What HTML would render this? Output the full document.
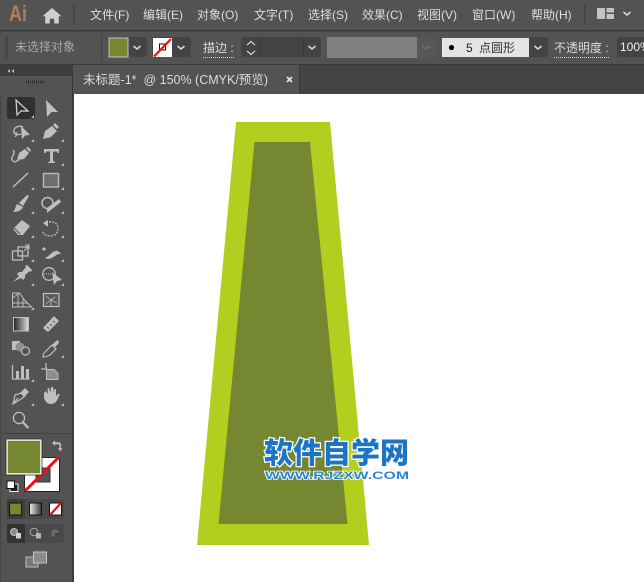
<!DOCTYPE html>
<html><head><meta charset="utf-8">
<style>
html,body{margin:0;padding:0;background:#535353;}
body{width:644px;height:582px;overflow:hidden;}
svg{display:block;}
text{font-family:"Liberation Sans","Noto Sans CJK SC",sans-serif;}
.m{font-size:12px;fill:#dedede;}
.i{fill:#bfbfbf;stroke:none;}
.s{fill:none;stroke:#bfbfbf;stroke-width:1.3;}
.c{fill:none;stroke:#dcdcdc;stroke-width:1.5;}
</style></head>
<body>
<svg width="644" height="582" viewBox="0 0 644 582" xmlns="http://www.w3.org/2000/svg">
<rect width="644" height="582" fill="#535353"/>
<!-- canvas -->
<rect x="74" y="94" width="570" height="488" fill="#fff"/>
<polygon points="236,122 330,122 369,545 197,545" fill="#b3ce1e"/>
<polygon points="254.500,142 310,142 347.500,524 218.500,524" fill="#758730"/>
<!-- top bars -->
<rect x="0" y="30" width="644" height="1.500" fill="#3a3a3a"/>
<rect x="0" y="64" width="644" height="1.500" fill="#3a3a3a"/>
<rect x="73" y="65" width="571" height="29" fill="#434343"/>
<rect x="73" y="65" width="226" height="29" fill="#535353"/>
<rect x="72" y="65" width="1" height="29" fill="#383838"/>
<rect x="299" y="65" width="1" height="29" fill="#383838"/>
<!-- menu -->
<text x="9" y="21" textLength="18" lengthAdjust="spacingAndGlyphs" style="font-size:22px;font-weight:bold" fill="#ad7d5c">Ai</text>
<path d="M52 8l9.500 8.200h-2.700v7.300h-4.600v-4.800h-4.400v4.800h-4.600v-7.300h-2.700z" fill="#cfcfcf"/>
<rect x="73" y="5" width="2" height="20" fill="#474747"/>
<text class="m" x="90" y="19">文件(F)</text>
<text class="m" x="143" y="19">编辑(E)</text>
<text class="m" x="197" y="19">对象(O)</text>
<text class="m" x="254" y="19">文字(T)</text>
<text class="m" x="308" y="19">选择(S)</text>
<text class="m" x="362" y="19">效果(C)</text>
<text class="m" x="417" y="19">视图(V)</text>
<text class="m" x="472" y="19">窗口(W)</text>
<text class="m" x="531" y="19">帮助(H)</text>
<rect x="584" y="5" width="2" height="20" fill="#474747"/>
<path d="M597 8h8v11h-8zM606.500 8h7.500v4.500h-7.500zM606.500 14h7.500v5h-7.500z" fill="#c4c4c4"/>
<path d="M623.500 12l3.500 3 3.500-3" class="c"/>
<!-- control bar -->
<path d="M6.500 37v21" stroke="#3a3a3a" stroke-width="3" stroke-dasharray="1 1"/>
<text x="15" y="51" style="font-size:12px" fill="#a8a8a8">未选择对象</text>
<rect x="101" y="35" width="1" height="25" fill="#404040"/>
<rect x="108" y="37" width="39" height="20" rx="3" fill="#434343"/>
<rect x="109" y="38" width="19" height="19" fill="#758730" stroke="#c4c4c4" stroke-width="1"/>
<path d="M133.500 46l3.500 3 3.500-3" class="c"/>
<rect x="152" y="37" width="39" height="20" rx="3" fill="#434343"/>
<rect x="153" y="38" width="19" height="19" fill="#fff"/>
<rect x="159.500" y="44" width="6" height="6" fill="none" stroke="#111" stroke-width="1"/>
<path d="M154 56.500l17-17.500" stroke="#f00e0e" stroke-width="2.200"/>
<path d="M177.500 46l3.500 3 3.500-3" class="c"/>
<text x="203" y="52" style="font-size:12px" fill="#dcdcdc">描边 :</text>
<path d="M203 57.500h32" stroke="#d0d0d0" stroke-width="1" stroke-dasharray="1 1"/>
<rect x="241" y="37" width="80" height="20" rx="3" fill="#434343"/>
<rect x="259" y="37" width="1" height="20" fill="#383838"/>
<rect x="303" y="37" width="1" height="20" fill="#383838"/>
<path d="M247 45l4-3.500 4 3.500M247 51l4 3.500 4-3.500" fill="none" stroke="#d0d0d0" stroke-width="1.200"/>
<path d="M308.500 46l3.500 3 3.500-3" class="c"/>
<rect x="327" y="37" width="90" height="21" fill="#808080"/>
<rect x="417" y="37" width="19" height="21" fill="#575757"/>
<path d="M422.500 46l3.500 3 3.500-3" fill="none" stroke="#707070" stroke-width="1.500"/>
<rect x="442" y="38" width="87" height="19" fill="#e4e4e4"/>
<rect x="529" y="37" width="19" height="20" rx="2" fill="#434343"/>
<circle cx="451.500" cy="47.500" r="2.600" fill="#000"/>
<text x="466" y="52" style="font-size:12px" fill="#222">5</text>
<text x="479" y="52" style="font-size:12px" fill="#333">点圆形</text>
<path d="M534.500 46l3.500 3 3.500-3" class="c"/>
<text x="554" y="52" style="font-size:12px" fill="#dcdcdc">不透明度 :</text>
<path d="M554 57.500h55" stroke="#d0d0d0" stroke-width="1" stroke-dasharray="1 1"/>
<rect x="617" y="37" width="30" height="20" rx="3" fill="#434343"/>
<text x="620" y="51" style="font-size:12px" fill="#f0f0f0">100%</text>
<!-- tab -->
<text x="83" y="84" textLength="185" style="font-size:12.500px" fill="#dcdcdc" xml:space="preserve">未标题-1*  @ 150% (CMYK/预览)</text>
<path d="M287 77l5 5M292 77l-5 5" stroke="#e0e0e0" stroke-width="1.800"/>
<!-- left panel -->
<rect x="0" y="65" width="72" height="11" fill="#3d3d3d"/>
<path d="M10 69l-2.500 2 2.500 2zM14 69l-2.500 2 2.500 2z" fill="#bdbdbd"/>
<path d="M26 82h19" stroke="#2f2f2f" stroke-width="3" stroke-dasharray="1 1"/>
<rect x="72" y="94" width="2" height="488" fill="#3c3c3c"/>
<rect x="0" y="94" width="1.500" height="488" fill="#484848"/>
<rect x="7" y="97" width="28" height="22" rx="2" fill="#2f2f2f"/>
<!-- row 1 -->
<path d="M16 100l1 15 4-4h7z" fill="none" stroke="#d6d6d6" stroke-width="1.200"/>
<path d="M46 100l1 17 4.500-5H58z" class="i"/>
<!-- row 2 -->
<path d="M21 126l9 9-5 .5-3 4z" class="i"/>
<path d="M21 134c-5 2-8-1-7-4 1-3 5-5 9-3M16 132c1 2 0 5-1 4" class="s"/>
<path d="M43 139l2-8 7-5 5 5-6 6z" class="i"/><path d="M53 125l2-2 4 4-2 2z" class="i"/>
<!-- row 3 -->
<path d="M17 160l2-7 6-4 4 4-5 6z" class="i"/><path d="M26 148l2-1 3 3-1 2z" class="i"/>
<path d="M13 150c2 2 1 5-1 7-1 2 1 5 3 5l4-2" class="s"/>
<path d="M44 149h15v4h-1.500l-.5-1.500h-4v10h2v1.500h-7V162h2v-10.500h-4l-.5 1.500H44z" class="i"/>
<!-- row 4 -->
<path d="M13 187l15-14" stroke="#bfbfbf" stroke-width="1.400"/>
<rect x="43.500" y="173.500" width="15" height="13.500" fill="#6e6e6e" stroke="#bfbfbf" stroke-width="1.300"/>
<!-- row 5 -->
<path d="M17 204l6 3c-2 4-6 5-10 5 2-1 2-5 4-8z" class="i"/><path d="M19 203l8-8 2 1-6 10z" class="i"/>
<circle cx="47.500" cy="203" r="5.500" class="s" style="stroke-width:1.500"/>
<path d="M47 213l14-11-2-3-12 9z" class="i"/>
<!-- row 6 -->
<path d="M13 229l9-9 8 6-7 9-5 0z" class="i"/><path d="M14 228l6 6" stroke="#535353" stroke-width="1"/>
<path d="M46 223c6-3 12 0 12 5s-3 8-7 8-7-1-8-4" fill="none" stroke="#bfbfbf" stroke-width="1.300" stroke-dasharray="2 1.200"/>
<path d="M48 220v7l-5-4z" class="i"/>
<!-- row 7 -->
<rect x="12.500" y="251" width="10" height="9" class="s"/><rect x="18" y="247" width="10" height="9" class="s"/>
<path d="M24 251l5-6M25 245h4v4" class="s" style="stroke-width:1"/>
<path d="M45 258c3-1 5-4 8-6 2-1 4-2 6 0l2 2c-2 0-4 0-6 2-3 2-6 4-10 2zM42 249l2 2 2-2-2-2zM44 248l2 8" class="i"/>
<!-- row 8 -->
<path d="M13 282l6-6-2-2 2-2h3l4-5-1-1 2-1 5 5-1 2-1-1-5 4v3l-2 2-2-2z" class="i"/>
<circle cx="49" cy="274" r="6.300" class="s"/>
<path d="M52 272l10 8-5 1-3 4z" class="i"/><path d="M44 274h8" stroke="#bfbfbf" stroke-dasharray="1 1"/>
<!-- row 9 -->
<path d="M12.500 293v14h19l-7-7-5-7z" class="s" style="stroke-width:1"/><path d="M12.500 298l7-5M12.500 303h15M18 293v14M23 299v8" class="s" style="stroke-width:.9"/>
<rect x="43.500" y="293.500" width="15.500" height="13" fill="#5a5a5a" stroke="#bfbfbf" stroke-width="1.200"/>
<path d="M46 296l5 4 4-3M51 300v6M46 304l5-4 6 3" class="s" style="stroke-width:.8"/>
<!-- row 10 -->
<defs><linearGradient id="g" x1="0" x2="1" y1="0" y2="0"><stop offset="0" stop-color="#222"/><stop offset="1" stop-color="#ddd"/></linearGradient>
<linearGradient id="g2" x1="0" x2="1" y1="0" y2="0"><stop offset="0" stop-color="#eee"/><stop offset="1" stop-color="#333"/></linearGradient></defs>
<rect x="13.500" y="317.500" width="15" height="13.500" fill="url(#g)" stroke="#bfbfbf" stroke-width="1"/>
<path d="M43 328l11-12 5 5-11 11z" class="i"/>
<path d="M47 327l2 1.500M50 324l2 1.500M53 321l2 1.500" stroke="#535353"/>
<!-- row 11 -->
<rect x="12" y="341" width="8" height="9" class="i"/>
<circle cx="20" cy="347" r="4.500" fill="#8f8f8f"/><circle cx="25.500" cy="351" r="4" fill="#535353" stroke="#bfbfbf" stroke-width="1.200"/>
<path d="M43 357c0-3 1-4 3-6l6-6 4 4-6 6c-2 1-4 2-7 2z" fill="none" stroke="#bfbfbf" stroke-width="1.200"/>
<path d="M52 345l4-4 2-1 1 2-1 2-3 3z" class="i"/>
<!-- row 12 -->
<path d="M12.500 365v14h17" class="s"/><rect x="16" y="371" width="3" height="7.500" class="i"/><rect x="21" y="366" width="3" height="12.500" class="i"/><rect x="26" y="369" width="3" height="9.500" class="i"/>
<path d="M41 369h6M46 363v6" class="s"/><path d="M46.500 369.500H54l4 4v6H46.500z" fill="#8e8e8e" stroke="#bfbfbf"/>
<!-- row 13 -->
<path d="M13 404l2-9 6-2 4 3-4 3z" fill="none" stroke="#bfbfbf" stroke-width="1.200"/><path d="M20 393l5-5 4 4-5 5z" class="i"/><path d="M13 404l5-6" class="s"/>
<path d="M44 393v5c1 3 3 6 7 6s6-3 7-6l2-4h-2l-2 2v-7h-1.500l-.5 4-1-6h-2l-.5 6-1.500-5h-1.500l.5 6-2-3z" class="i"/>
<!-- row 14 -->
<circle cx="19" cy="418" r="5.600" fill="none" stroke="#bfbfbf" stroke-width="1.300"/>
<path d="M23 422.500l5.500 5.500" stroke="#bfbfbf" stroke-width="2.200"/>
<!-- corner ticks -->
<path fill="#bfbfbf" d="M34 118v-3l-3 3zM64 142v-3l-3 3zM34 142v-3l-3 3zM64 166v-3l-3 3zM34 190v-3l-3 3zM64 190v-3l-3 3zM34 214v-3l-3 3zM64 214v-3l-3 3zM34 238v-3l-3 3zM64 238v-3l-3 3zM34 262v-3l-3 3zM64 262v-3l-3 3zM34 286v-3l-3 3zM64 286v-3l-3 3zM34 310v-3l-3 3zM64 358v-3l-3 3zM34 382v-3l-3 3zM34 406v-3l-3 3zM64 406v-3l-3 3z"/>
<rect x="2" y="433" width="70" height="1" fill="#434343"/>
<!-- fill / stroke -->
<rect x="24.500" y="457.500" width="35" height="34" fill="#fff" stroke="#222"/>
<rect x="36" y="468" width="14" height="14" fill="#535353" stroke="#333"/>
<path d="M25 491l34-34" stroke="#f30d0d" stroke-width="3"/>
<rect x="7" y="440" width="34" height="34" fill="#758730" stroke="#fff" stroke-width="1.500"/>
<rect x="6" y="439" width="36" height="36" fill="none" stroke="#222" stroke-width=".7"/>
<path d="M52 443l3-2.500v1.700h3c2 0 3 1 3 3v3h1.700l-2.500 3-2.500-3h1.800v-2.500c0-1-.5-1.500-1.500-1.500h-3v1.600z" fill="#bfbfbf"/>
<rect x="10" y="484" width="8" height="7.500" fill="#222" stroke="#eee"/>
<rect x="7" y="481" width="7.500" height="7.500" fill="#fff" stroke="#111"/>
<!-- mode rows -->
<rect x="7" y="499" width="57" height="20" rx="3" fill="#4a4a4a"/>
<rect x="7" y="499" width="18" height="20" rx="2" fill="#3d3d3d"/>
<rect x="9.500" y="503" width="12" height="12" fill="#758730" stroke="#111"/>
<rect x="29.500" y="503" width="12" height="12" fill="url(#g2)" stroke="#111"/>
<rect x="49.500" y="503" width="12" height="12" fill="#fff" stroke="#111"/>
<path d="M50 515l11-12" stroke="#f30d0d" stroke-width="2.200"/>
<rect x="7" y="524" width="57" height="19" rx="3" fill="#4a4a4a"/>
<rect x="7" y="524" width="18" height="19" rx="2" fill="#323232"/>
<circle cx="14" cy="532" r="3.500" fill="#8a8a8a" stroke="#bfbfbf"/><rect x="16" y="533" width="5" height="5.500" fill="#cfcfcf"/>
<circle cx="34" cy="532" r="3.800" fill="none" stroke="#aaa"/><rect x="36" y="533" width="5" height="5.500" fill="#b5b5b5"/>
<circle cx="55" cy="533" r="3.800" fill="#6a6a6a"/><path d="M55 533h4v4h-4z" fill="#444"/>
<rect x="26" y="557" width="12" height="10" fill="#777" stroke="#bbb"/>
<rect x="33.500" y="552" width="13" height="11" fill="#8b8b8b" stroke="#c4c4c4"/>
<!-- watermark -->
<text x="264" y="463" style="font-size:29px;font-weight:900;paint-order:stroke" fill="#1c75c4" stroke="#fff" stroke-width="2.500">软件自学网</text>
<text x="265" y="479" textLength="144" lengthAdjust="spacingAndGlyphs" style="font-size:11px;font-weight:bold;paint-order:stroke" fill="#2a86d2" stroke="#fff" stroke-width="1.500">WWW.RJZXW.COM</text>
</svg>
</body></html>
